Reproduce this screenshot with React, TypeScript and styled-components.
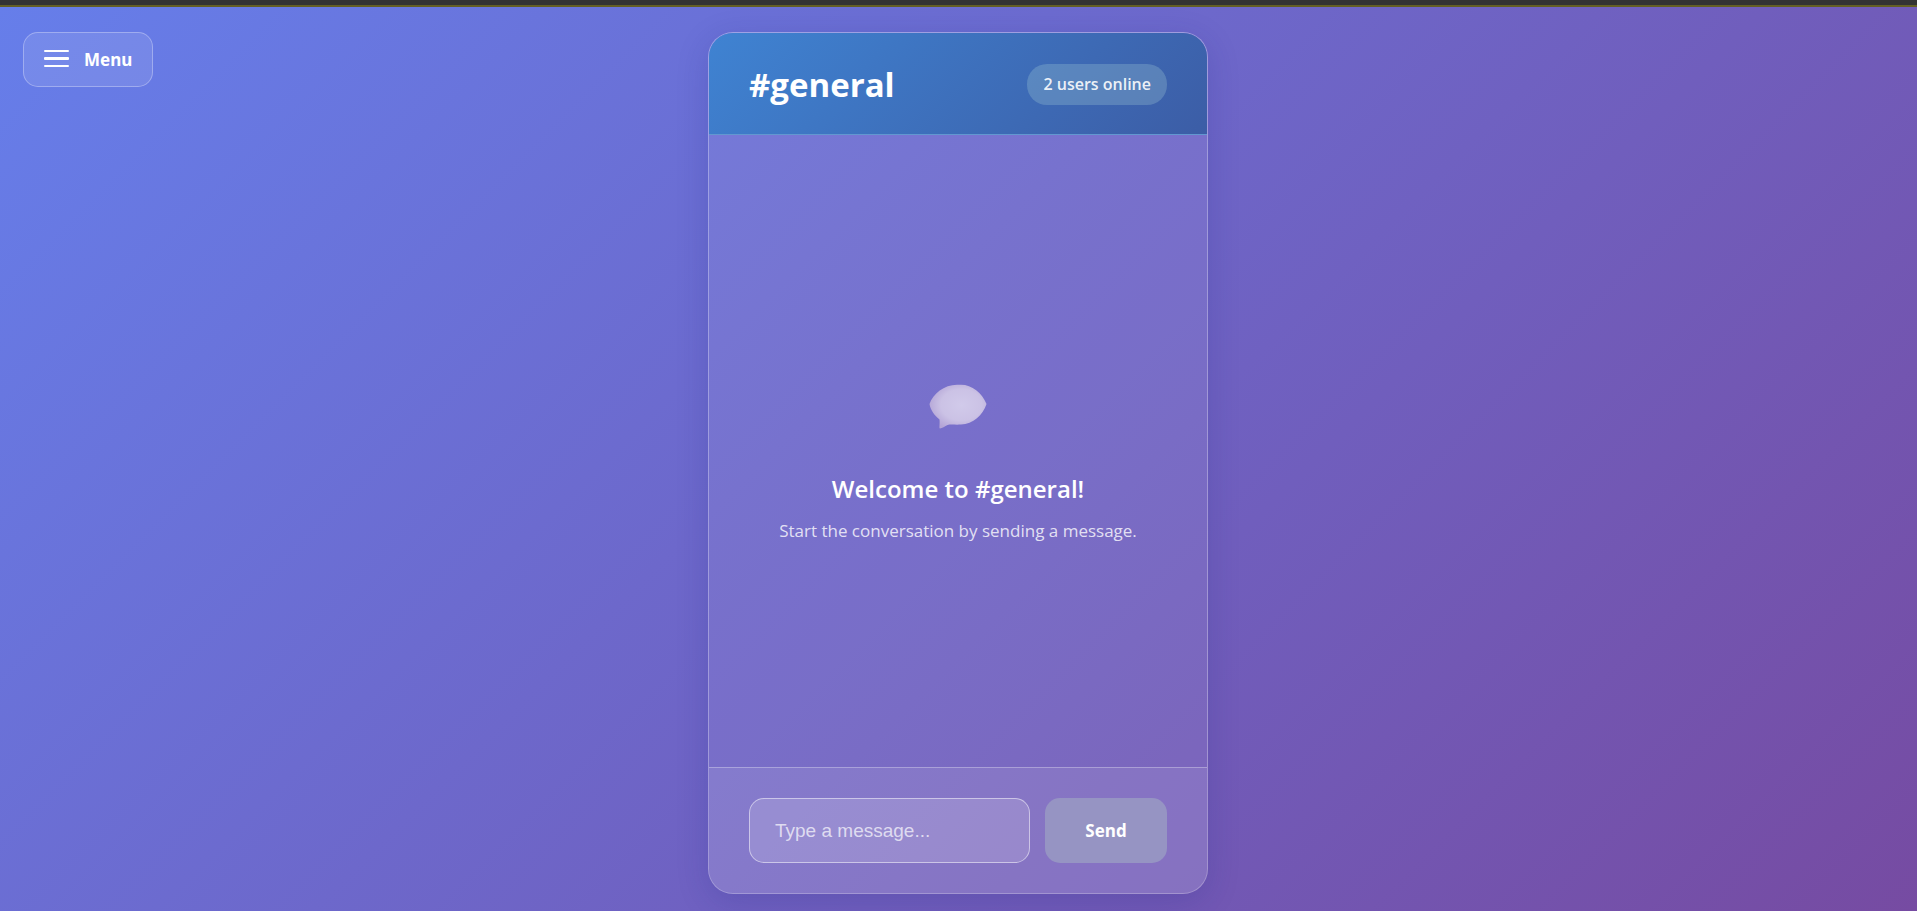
import React, { useState } from "react";
import styled, { createGlobalStyle } from "styled-components";

const GlobalStyle = createGlobalStyle`
  *, *::before, *::after { box-sizing: border-box; }
  html, body, #root { height: 100%; }
  body {
    margin: 0;
    font-family: "Open Sans", "Noto Sans", sans-serif;
    color: #ffffff;
  }
`;

const Page = styled.div`
  display: flex;
  flex-direction: column;
  min-height: 100%;
`;

const TopBar = styled.div`
  height: 7px;
  flex: none;
  background: #333333;
  border-bottom: 2px solid #645f24;
`;

const Backdrop = styled.div`
  flex: 1;
  display: grid;
  grid-template-columns: 1fr minmax(320px, 500px) 1fr;
  padding: 25px 24px 17px 23px;
  background: linear-gradient(135deg, #667eea 0%, #764ba2 100%);
`;

const MenuButton = styled.button`
  justify-self: start;
  align-self: start;
  display: flex;
  align-items: center;
  gap: 15px;
  height: 55px;
  padding: 0 20px;
  color: #ffffff;
  font: 700 17px/24px "Noto Sans", sans-serif;
  background: rgba(255, 255, 255, 0.1);
  border: 1px solid rgba(255, 255, 255, 0.3);
  border-radius: 15px;
  cursor: pointer;
`;

const MenuIcon = styled.span`
  display: flex;
  flex-direction: column;
  gap: 5px;
  width: 25px;
  padding-bottom: 2px;
`;

const MenuLine = styled.span<{ $thick?: boolean }>`
  height: ${({ $thick }) => ($thick ? 3 : 2)}px;
  border-radius: 1px;
  background: #ffffff;
`;

const ChatPanel = styled.main`
  display: flex;
  flex-direction: column;
  overflow: hidden;
  background: rgba(255, 255, 255, 0.07);
  border: 1px solid rgba(255, 255, 255, 0.3);
  border-radius: 25px;
  box-shadow: 0 8px 32px rgba(31, 38, 135, 0.2);
`;

const ChatHeader = styled.header`
  display: flex;
  align-items: center;
  justify-content: space-between;
  height: 102px;
  padding: 2px 40px 0;
  background: linear-gradient(135deg, #3f83d2 0%, #3c5da6 100%);
  border-bottom: 1px solid #6297d0;
`;

const ChannelName = styled.h1`
  margin: 0;
  font-size: 33px;
  line-height: 48px;
  font-weight: 700;
`;

const OnlineBadge = styled.span`
  padding: 8px 16px;
  color: rgba(255, 255, 255, 0.9);
  font-size: 16px;
  line-height: 25px;
  font-weight: 600;
  background: rgba(180, 220, 220, 0.25);
  border-radius: 20px;
`;

const Messages = styled.section`
  flex: 1;
  display: flex;
  flex-direction: column;
  align-items: center;
  justify-content: center;
  padding-top: 26px;
  text-align: center;
`;

const WelcomeTitle = styled.h2`
  margin: 42px 0 10px;
  font-size: 24px;
  line-height: 36px;
  font-weight: 600;
`;

const WelcomeText = styled.p`
  margin: 0;
  color: rgba(255, 255, 255, 0.8);
  font-size: 17px;
  line-height: 28px;
`;

const Composer = styled.form`
  display: flex;
  gap: 15px;
  padding: 30px 40px;
  background: rgba(255, 255, 255, 0.09);
  border-top: 1px solid rgba(255, 255, 255, 0.3);
`;

const MessageInput = styled.input`
  flex: 1;
  min-width: 0;
  height: 65px;
  padding: 0 25px;
  color: #ffffff;
  font: 400 19px/24px "Liberation Sans", Arial, sans-serif;
  background: rgba(255, 255, 255, 0.15);
  border: 1px solid rgba(255, 255, 255, 0.5);
  border-radius: 15px;
  outline: none;
  &::placeholder { color: rgba(255, 255, 255, 0.7); opacity: 1; }
`;

const SendButton = styled.button`
  width: 122px;
  height: 65px;
  color: #ffffff;
  font: 700 17px/24px "Open Sans", "Noto Sans", sans-serif;
  background: #9694c3;
  border: 0;
  border-radius: 15px;
`;

const SpeechBubble = () => (
  <svg width="58" height="45" viewBox="0 0 58 45" aria-hidden="true">
    <defs>
      <radialGradient id="bubble" cx="0.56" cy="0.46" r="0.6">
        <stop offset="0" stopColor="#d1caea" />
        <stop offset="0.6" stopColor="#cbc2e5" />
        <stop offset="1" stopColor="#b3a4d6" />
      </radialGradient>
    </defs>
    <path
      d="M0.500 20C4 10 15 .8 28 .8H32C43 .8 53 9 57.500 20C54 31 44 40 32 40.500C26 41 22 40 18.500 41C16 42 13 44.500 11 44.500C9.800 44.500 11 40 10.500 35.500C5 31 1.500 26 .5 20Z"
      fill="url(#bubble)"
    />
  </svg>
);

export default function App() {
  const [message, setMessage] = useState("");
  return (
    <Page>
      <GlobalStyle />
      <TopBar />
      <Backdrop>
        <MenuButton type="button">
          <MenuIcon aria-hidden="true">
            <MenuLine />
            <MenuLine $thick />
            <MenuLine />
          </MenuIcon>
          Menu
        </MenuButton>
        <ChatPanel>
          <ChatHeader>
            <ChannelName>#general</ChannelName>
            <OnlineBadge>2 users online</OnlineBadge>
          </ChatHeader>
          <Messages>
            <SpeechBubble />
            <WelcomeTitle>Welcome to #general!</WelcomeTitle>
            <WelcomeText>Start the conversation by sending a message.</WelcomeText>
          </Messages>
          <Composer onSubmit={(event) => event.preventDefault()}>
            <MessageInput
              type="text"
              aria-label="Message"
              placeholder="Type a message..."
              value={message}
              onChange={(event) => setMessage(event.target.value)}
            />
            <SendButton type="submit" disabled={!message}>Send</SendButton>
          </Composer>
        </ChatPanel>
      </Backdrop>
    </Page>
  );
}
